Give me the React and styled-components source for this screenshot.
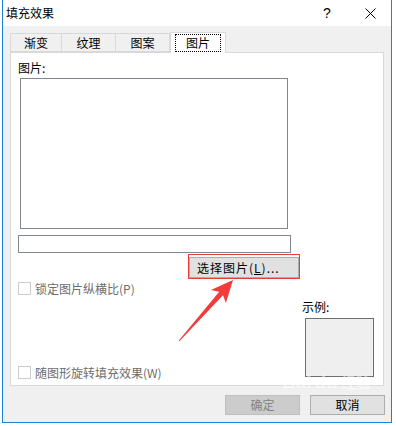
import React from 'react'
import styled, { createGlobalStyle } from 'styled-components'

const GlobalStyle = createGlobalStyle`
  html, body {
    margin: 0;
    padding: 0;
    background: #ffffff;
  }
  body {
    font-family: "Noto Sans CJK SC", "Liberation Sans", sans-serif;
    font-size: 12px;
    color: #000;
  }
`

const Page = styled.div`
  position: relative;
  width: 396px;
  height: 426px;
  overflow: hidden;
`

const Window = styled.div`
  margin-left: 2px;
  width: 390px;
  height: 423px;
  box-sizing: border-box;
  border: 1px solid #1883d7;
  border-top: none;
  background: #f0f0f0;
  display: flex;
  flex-direction: column;
`

const TitleBar = styled.div`
  height: 26px;
  background: #fff;
  display: flex;
  align-items: center;
  padding-left: 3px;
  line-height: 1;
`

const Title = styled.div`
  flex: 1;
  font-size: 12px;
`

const HelpMark = styled.div`
  width: 12px;
  font-size: 14px;
  font-family: "Liberation Sans", sans-serif;
  margin-right: 30px;
  text-align: center;
`

const CloseBox = styled.div`
  width: 14px;
  height: 14px;
  margin-right: 14px;
  display: flex;
  align-items: center;
  justify-content: center;
`

const Body = styled.div`
  flex: 1;
  padding: 6px 0 0 7px;
  display: flex;
  flex-direction: column;
`

const TabRow = styled.div`
  display: flex;
  align-items: flex-end;
  height: 20px;
  position: relative;
  z-index: 1;
`

const Tab = styled.div`
  width: ${({ w }) => w}px;
  height: ${({ active }) => (active ? 21 : 19)}px;
  box-sizing: border-box;
  border: 1px solid #d9d9d9;
  border-left: ${({ first, active }) => (first || active ? '1px solid #d9d9d9' : 'none')};
  border-bottom: ${({ active }) => (active ? 'none' : '1px solid #d9d9d9')};
  background: ${({ active }) => (active ? '#fff' : '#f0f0f0')};
  display: flex;
  align-items: center;
  justify-content: center;
  margin-bottom: ${({ active }) => (active ? '-1px' : '0')};
  font-size: 12px;
`

const Focus = styled.span`
  border: 1px dotted #000;
  padding: 1px 10px;
  line-height: 14px;
`

const Panel = styled.div`
  width: 374px;
  height: 334px;
  box-sizing: border-box;
  background: #fff;
  border: 1px solid #d9d9d9;
  padding: 7px 0 0 7px;
  display: flex;
  flex-direction: column;
`

const Label = styled.div`
  height: 16px;
  line-height: 16px;
  font-size: 12px;
`

const PictureBox = styled.div`
  margin: 2px 0 0 2px;
  width: 268px;
  height: 151px;
  box-sizing: border-box;
  border: 1px solid #82868d;
`

const PathInput = styled.div`
  margin-top: 6px;
  width: 273px;
  height: 18px;
  box-sizing: border-box;
  border: 1px solid #82868d;
`

const Highlight = styled.div`
  margin: 1px 0 0 170px;
  width: 112px;
  height: 25px;
  box-sizing: border-box;
  border: 1px solid #e53d3d;
  padding-top: 2px;
`

const Button = styled.div`
  width: ${({ w }) => w || 110}px;
  height: ${({ h }) => h || 20}px;
  box-sizing: border-box;
  border: 1px solid ${({ disabled }) => (disabled ? '#bfbfbf' : '#adadad')};
  background: ${({ disabled }) => (disabled ? '#cccccc' : '#e1e1e1')};
  color: ${({ disabled }) => (disabled ? '#838383' : '#000')};
  display: flex;
  align-items: center;
  justify-content: ${({ left }) => (left ? 'flex-start' : 'center')};
  padding-left: ${({ left }) => (left ? '7px' : '0')};
  font-size: 12px;
  line-height: 1;
  letter-spacing: ${({ spaced }) => (spaced ? '1px' : '0')};
`

const LowerRow = styled.div`
  margin-top: 3px;
  height: 97px;
  display: flex;
`

const Options = styled.div`
  flex: 1;
  display: flex;
  flex-direction: column;
  justify-content: space-between;
`

const CheckRow = styled.div`
  display: flex;
  align-items: center;
  height: 13px;
  color: #6d6d6d;
  font-size: 12px;
`

const Check = styled.span`
  width: 13px;
  height: 13px;
  box-sizing: border-box;
  border: 1px solid #cccccc;
  background: #fff;
  margin-right: 4px;
`

const SampleCol = styled.div`
  width: 81px;
  padding-top: 17px;
  display: flex;
  flex-direction: column;
  align-items: flex-start;
`

const SampleLabel = styled.div`
  line-height: 16px;
  font-size: 12px;
`

const SampleBox = styled.div`
  margin: 3px 0 0 3px;
  width: 69px;
  height: 59px;
  box-sizing: border-box;
  border: 1px solid #6e6e6e;
  background: #efefef;
`

const Footer = styled.div`
  margin-top: 9px;
  display: flex;
  justify-content: flex-end;
  gap: 10px;
  padding-right: 6px;
`

const Arrow = styled.svg`
  position: absolute;
  left: 0;
  top: 0;
  pointer-events: none;
`

const Watermark = styled.div`
  position: absolute;
  left: 282px;
  top: 372px;
  color: #fff;
  opacity: 0.55;
  font-family: "Liberation Sans", sans-serif;
  pointer-events: none;
  line-height: 1;
`

const MarkTop = styled.div`
  display: flex;
  align-items: center;
  gap: 3px;
  font-size: 19px;
  font-weight: bold;
`

const MarkCn = styled.span`
  font-size: 15px;
  font-family: "Noto Sans CJK SC", sans-serif;
`

const tabs = [
  { label: '渐变', w: 52 },
  { label: '纹理', w: 54 },
  { label: '图案', w: 54 },
  { label: '图片', w: 56, active: true }
]

export default function App() {
  return (
    <Page>
      <GlobalStyle />
      <Window>
        <TitleBar>
          <Title>填充效果</Title>
          <HelpMark>?</HelpMark>
          <CloseBox>
            <svg width="11" height="11" viewBox="0 0 11 11">
              <path d="M0.5 0.5 L10.5 10.5 M10.5 0.5 L0.5 10.5" stroke="#000" strokeWidth="1" />
            </svg>
          </CloseBox>
        </TitleBar>
        <Body>
          <TabRow>
            {tabs.map((t, i) => (
              <Tab key={t.label} w={t.w} first={i === 0} active={t.active}>
                {t.active ? <Focus>{t.label}</Focus> : t.label}
              </Tab>
            ))}
          </TabRow>
          <Panel>
            <Label>图片:</Label>
            <PictureBox />
            <PathInput />
            <Highlight>
              <Button w={110} h={21} left spaced>
                选择图片(<u>L</u>)...
              </Button>
            </Highlight>
            <LowerRow>
              <Options>
                <CheckRow><Check />锁定图片纵横比(P)</CheckRow>
                <CheckRow><Check />随图形旋转填充效果(W)</CheckRow>
              </Options>
              <SampleCol>
                <SampleLabel>示例:</SampleLabel>
                <SampleBox />
              </SampleCol>
            </LowerRow>
          </Panel>
          <Footer>
            <Button w={75} disabled>确定</Button>
            <Button w={75}>取消</Button>
          </Footer>
        </Body>
      </Window>
      <Arrow width="396" height="426" viewBox="0 0 396 426">
        <polygon
          points="233,280 225.9,303.1 223,295.2 179.4,341.3 178.6,340.7 219.2,291.8 210.9,289.9"
          fill="#f23b3b"
        />
      </Arrow>
      <Watermark>
        <MarkTop>
          <span>Bai</span>
          <span>du</span>
          <MarkCn>经验</MarkCn>
        </MarkTop>
      </Watermark>
    </Page>
  )
}
